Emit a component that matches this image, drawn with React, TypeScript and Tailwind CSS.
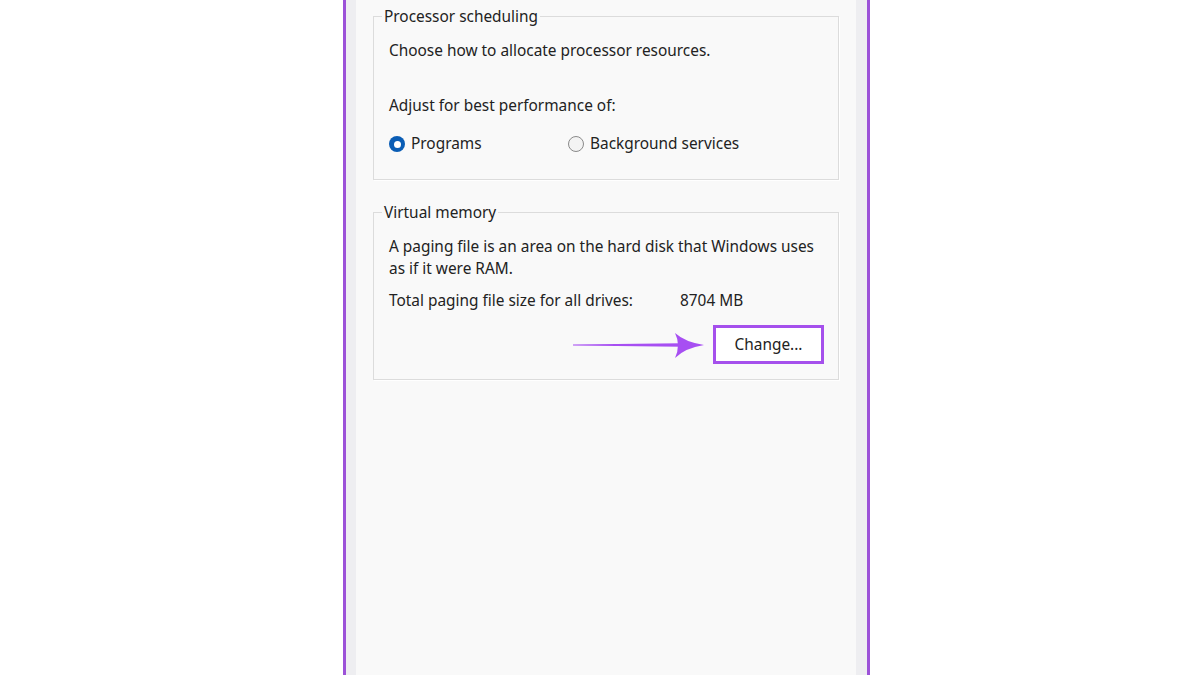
import React from "react";

const font = { fontFamily: '"Noto Sans", "Open Sans", sans-serif' };

function GroupBox({ label, children, className }: { label: string; children: React.ReactNode; className?: string }) {
  return (
    <div className={"relative border border-[#dcdcdc] shadow-[1px_1px_0_#ffffff] " + (className ?? "")}>
      <div className="absolute -top-[10px] left-[8px] bg-[#f9f9f9] px-[2px] text-[15.4px] leading-[20px] text-[#222222]">
        {label}
      </div>
      {children}
    </div>
  );
}

function Radio({ checked, label }: { checked?: boolean; label: string }) {
  return (
    <div className="flex items-center gap-[6px]">
      {checked ? (
        <span className="flex h-[16px] w-[16px] items-center justify-center rounded-full bg-[#0a5db5]">
          <span className="h-[7px] w-[7px] rounded-full bg-white" />
        </span>
      ) : (
        <span className="h-[16px] w-[16px] rounded-full border border-[#8a8a8a] bg-[#f3f3f3]" />
      )}
      <span>{label}</span>
    </div>
  );
}

export default function App() {
  return (
    <div className="flex h-[675px] w-[1200px] overflow-hidden bg-white pl-[343px]" style={font}>
      <div className="flex h-full w-[527px] border-x-[3px] border-[#9c52d8]">
        <div className="w-[10px] bg-[#eeeef1]" />
        <div className="flex-1 bg-[#f9f9f9] px-[17px] pt-[16px] text-[15.4px] leading-[20px] text-[#222222]">
          <GroupBox label="Processor scheduling" className="pb-[25px] pl-[15px] pt-[24px]">
            <div>Choose how to allocate processor resources.</div>
            <div className="mt-[35px]">Adjust for best performance of:</div>
            <div className="mt-[18px] flex">
              <div className="w-[179px]">
                <Radio checked label="Programs" />
              </div>
              <Radio label="Background services" />
            </div>
          </GroupBox>
          <GroupBox label="Virtual memory" className="mt-[32px] pb-[15px] pl-[15px] pr-[14px] pt-[23px]">
            <div className="leading-[22px]">
              A paging file is an area on the hard disk that Windows uses
              <br />
              as if it were RAM.
            </div>
            <div className="mt-[11px] flex">
              <span className="w-[291px]">Total paging file size for all drives:</span>
              <span>8704 MB</span>
            </div>
            <div className="mt-[14px] flex items-center justify-end gap-[8px]">
              <svg width="132" height="26" viewBox="0 0 132 26" className="mt-[2px]">
                <path d="M0 11.4 L108 10.2 L108 13.8 L0 12.6 Z" fill="#a74ff2" />
                <path d="M102 0 Q112 9 131 12 Q112 15 102 25 Q108 12 102 0 Z" fill="#a74ff2" />
              </svg>
              <div className="flex h-[39px] w-[111px] items-center justify-center border-[3px] border-[#a550ec] bg-white text-[15.4px]">
                Change...
              </div>
            </div>
          </GroupBox>
        </div>
        <div className="w-[11px] bg-[#eeeef1]" />
      </div>
    </div>
  );
}
